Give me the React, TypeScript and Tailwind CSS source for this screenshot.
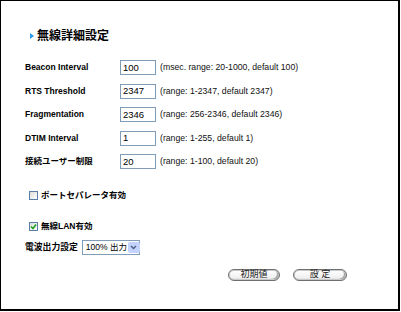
import React from 'react';

interface Field {
  label: string;
  value: string;
  hint: string;
}

const fields: Field[] = [
  { label: 'Beacon Interval', value: '100', hint: '(msec. range: 20-1000, default 100)' },
  { label: 'RTS Threshold', value: '2347', hint: '(range: 1-2347, default 2347)' },
  { label: 'Fragmentation', value: '2346', hint: '(range: 256-2346, default 2346)' },
  { label: 'DTIM Interval', value: '1', hint: '(range: 1-255, default 1)' },
  { label: '接続ユーザー制限', value: '20', hint: '(range: 1-100, default 20)' },
];

const font = "font-['Liberation_Sans','Noto_Sans_CJK_JP',sans-serif]";

const CheckBox = ({ checked }: { checked?: boolean }) => (
  <span className="flex h-[9px] w-[9px] items-center justify-center border border-[#5b7fa8] bg-gradient-to-br from-[#dcdcd6] to-white">
    {checked && (
      <svg width="7" height="7" viewBox="0 0 7 7">
        <path d="M1 3.5 L3 5.5 L6 1.5" fill="none" stroke="#21a121" strokeWidth="1.6" />
      </svg>
    )}
  </span>
);

const PillButton = ({ children, w }: { children: React.ReactNode; w: string }) => (
  <button
    className={`${w} flex h-[12px] items-center justify-center rounded-full border border-[#6f6f6f] bg-gradient-to-b from-white to-[#ececec] text-[9px] leading-none text-[#222] shadow-[inset_0_0_0_1px_#c9c9c9,inset_-2px_-1px_1px_#9c9c9c]`}
  >
    {children}
  </button>
);

const App = () => {
  return (
    <div className={`h-[312px] w-[401px] bg-white ${font}`}>
      <div className="h-[311px] w-[400px] border-b-2 border-l border-r-2 border-t border-black pl-[24px] pt-[27px]">
        {/* title */}
        <div className="flex h-[16px] items-center">
          <svg width="4" height="6" viewBox="0 0 4 6" className="ml-[5px] mr-[3px]">
            <path d="M0 0 L4 3 L0 6 Z" fill="#2f9be8" />
          </svg>
          <h1 className="text-[12px] font-bold leading-none text-black">無線詳細設定</h1>
        </div>

        {/* numeric settings */}
        <div className="mt-[12px]">
          {fields.map((f) => (
            <div key={f.label} className="flex h-[23.5px] items-center">
              <span className="w-[95px] text-[8.5px] font-bold text-black">{f.label}</span>
              <span className="flex h-[15px] w-[36px] items-center border border-[#7f9db9] bg-white pl-[2px] text-[9.5px] text-black">
                {f.value}
              </span>
              <span className="ml-[4px] text-[8.7px] text-[#111]">{f.hint}</span>
            </div>
          ))}
        </div>

        {/* checkboxes */}
        <div className="mt-[14px] flex h-[16px] items-center pl-[4px]">
          <CheckBox />
          <span className="ml-[3px] text-[8.5px] font-bold text-black">ポートセパレータ有効</span>
        </div>
        <div className="mt-[15px] flex h-[16px] items-center pl-[4px]">
          <CheckBox checked />
          <span className="ml-[3px] text-[8.5px] font-bold text-black">無線LAN有効</span>
        </div>

        {/* output power */}
        <div className="mt-[5px] flex h-[16px] items-center">
          <span className="text-[8.8px] font-bold text-black">電波出力設定</span>
          <div className="ml-[4px] flex h-[15px] w-[58px] items-center border border-[#7f9db9] bg-white">
            <span className="flex-1 whitespace-nowrap pl-[3px] text-[8.5px] leading-none text-black">100% 出力</span>
            <span className="m-[1px] flex h-[11px] w-[12px] shrink-0 items-center justify-center rounded-[2px] bg-[#c3d3fd]">
              <svg width="7" height="5" viewBox="0 0 7 5">
                <path d="M1 1 L3.5 3.5 L6 1" fill="none" stroke="#4d6185" strokeWidth="1.5" />
              </svg>
            </span>
          </div>
        </div>

        {/* buttons */}
        <div className="mt-[13px] flex h-[12px] items-center justify-end gap-[13px] pr-[51px]">
          <PillButton w="w-[52px]">初期値</PillButton>
          <PillButton w="w-[54px]">設 定</PillButton>
        </div>
      </div>
    </div>
  );
};

export default App;
